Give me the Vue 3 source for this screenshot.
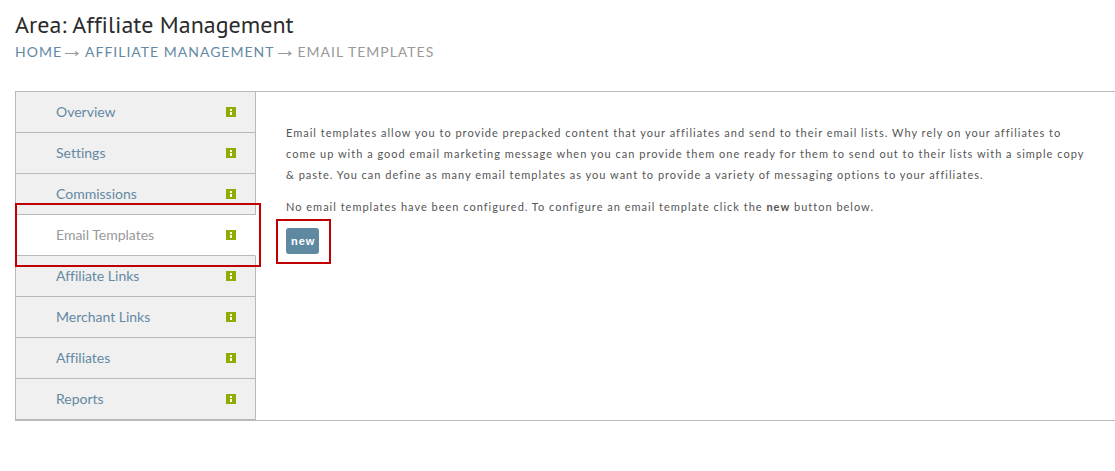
<script setup>
const items = [
  'Overview',
  'Settings',
  'Commissions',
  'Email Templates',
  'Affiliate Links',
  'Merchant Links',
  'Affiliates',
  'Reports',
]
const active = 'Email Templates'
</script>

<template>
  <div class="page">
    <header>
      <h1>Area: Affiliate Management</h1>
      <nav class="crumbs" aria-label="Breadcrumb">
        <a href="#">HOME</a>
        <svg class="arrow" viewBox="0 0 14 9" aria-hidden="true"><path d="M0 5.5H13" /><path class="head" d="M10 2.5L14 5.5L10 8.5L11 5.5Z" /></svg>
        <a href="#">AFFILIATE MANAGEMENT</a>
        <svg class="arrow" viewBox="0 0 14 9" aria-hidden="true"><path d="M0 5.5H13" /><path class="head" d="M10 2.5L14 5.5L10 8.5L11 5.5Z" /></svg>
        <span>EMAIL TEMPLATES</span>
      </nav>
    </header>

    <div class="panel">
      <nav class="side" aria-label="Section">
        <ul>
          <li v-for="item in items" :key="item" :class="{ active: item === active }">
            <a href="#">{{ item }}</a>
            <svg class="info" viewBox="0 0 10 10" aria-hidden="true">
              <rect width="10" height="10" fill="#8fac00" />
              <path d="M4 2H6V4H4ZM4 5H6V8H4Z" fill="#fff" />
            </svg>
            <span v-if="item === active" class="callout callout-tab"></span>
          </li>
        </ul>
      </nav>

      <main>
        <p>
          Email templates allow you to provide prepacked content that your affiliates and send to their
          email lists. Why rely on your affiliates to come up with a good email marketing message when
          you can provide them one ready for them to send out to their lists with a simple copy &amp;
          paste. You can define as many email templates as you want to provide a variety of messaging
          options to your affiliates.
        </p>
        <p>
          No email templates have been configured. To configure an email template click the
          <strong>new</strong> button below.
        </p>
        <div class="action">
          <button type="button">new</button>
          <span class="callout callout-button"></span>
        </div>
      </main>
    </div>
  </div>
</template>

<style>
body {
  background: #fff;
}
</style>

<style scoped>
.page {
  padding: 8px 0 50px 15px;
  font-family: Lato, "Liberation Sans", sans-serif;
}

h1 {
  margin: 0;
  font-family: "PT Sans", "Noto Sans", sans-serif;
  font-size: 24px;
  font-weight: 400;
  font-variant-ligatures: none;
  line-height: 34px;
  color: #2b2b2b;
}

.crumbs {
  display: flex;
  align-items: center;
  font-size: 14px;
  line-height: 20px;
  letter-spacing: 1px;
  color: #999;
}

a {
  color: #6489a3;
  text-decoration: none;
}

.arrow {
  width: 14px;
  height: 9px;
  margin: 0 6px 0 3px;
  fill: none;
  stroke: #999;
  stroke-width: 1;
}

.arrow .head {
  fill: #999;
  stroke: none;
}

.panel {
  display: flex;
  margin-top: 29px;
  border: 1px solid #b9b9b9;
  border-right: 0;
}

.side {
  flex: 0 0 240px;
}

ul {
  margin: 0;
  padding: 0;
  list-style: none;
}

li {
  position: relative;
  display: flex;
  align-items: center;
  justify-content: space-between;
  height: 40px;
  padding: 0 19px 0 40px;
  border-right: 1px solid #b9b9b9;
  border-bottom: 1px solid #b9b9b9;
  background: #f0f0f0;
  font-size: 14px;
  font-variant-ligatures: none;
}

li a {
  padding-bottom: 2px;
}

li.active {
  border-right-color: #fff;
  background: #fff;
}

li.active a {
  color: #999;
}

.info {
  width: 10px;
  height: 10px;
}

main {
  flex: 1;
  min-width: 0;
  padding: 30px 24px 30px 30px;
  font-size: 11px;
  line-height: 21px;
  letter-spacing: 1px;
  color: #555;
}

p {
  margin: 0 0 11px;
}

.action {
  position: relative;
  width: fit-content;
}

button {
  display: block;
  height: 26px;
  padding: 0 4px 0 5px;
  border: 0;
  border-radius: 3px;
  background: #5f88a1;
  color: #fff;
  font-family: "Liberation Sans", Arial, sans-serif;
  font-size: 11px;
  font-weight: 700;
  letter-spacing: 1px;
}

.callout {
  position: absolute;
  box-sizing: border-box;
  border: 2px solid #c00000;
  pointer-events: none;
  z-index: 1;
}

.callout-tab {
  inset: -12px -6px -12px -1px;
}

.callout-button {
  inset: -9px -12px -10px -10px;
}
</style>
